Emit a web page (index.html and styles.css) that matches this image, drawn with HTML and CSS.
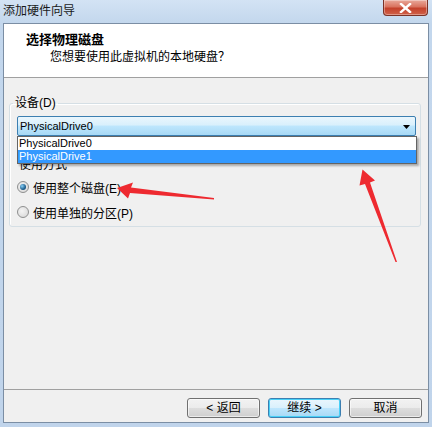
FILE: index.html
```html
<!DOCTYPE html>
<html lang="zh-CN">
<head>
<meta charset="utf-8">
<title>添加硬件向导</title>
<link rel="stylesheet" href="styles.css">
</head>
<body>
<div class="window">
  <div class="titlebar">
    <span class="title">添加硬件向导</span>
    <span class="close"><svg width="13" height="10" viewBox="0 0 13 10"><path d="M2 1 L11 9 M11 1 L2 9" stroke="#fff" stroke-width="2.4" stroke-linecap="square"/></svg></span>
  </div>
  <div class="client">
    <div class="header">
      <div class="h-title">选择物理磁盘</div>
      <div class="h-sub">您想要使用此虚拟机的本地硬盘？</div>
    </div>
    <div class="body">
      <fieldset class="group">
        <legend>设备(D)</legend>
        <div class="combo-wrap">
          <div class="combo">
            <span class="combo-text">PhysicalDrive0</span>
            <svg class="combo-arrow" width="7" height="4" viewBox="0 0 7 4"><path d="M0 0 H7 L3.5 4 Z" fill="#000"/></svg>
          </div>
          <ul class="dropdown">
            <li class="item">PhysicalDrive0</li>
            <li class="item selected">PhysicalDrive1</li>
          </ul>
        </div>
        <div class="mode-label">使用方式</div>
        <label class="radio-row"><span class="radio checked"></span><span>使用整个磁盘(E)</span></label>
        <label class="radio-row"><span class="radio"></span><span>使用单独的分区(P)</span></label>
      </fieldset>
    </div>
    <div class="footer">
      <button class="btn">&lt; 返回</button>
      <button class="btn default">继续 &gt;</button>
      <button class="btn">取消</button>
    </div>
  </div>
  <svg class="arrows" width="432" height="427" viewBox="0 0 432 427">
    <polygon fill="#ee2a30" points="117,188 133,182.5 131,187.5 214,198 214,199.5 130,193 128,198.5"/>
    <polygon fill="#ee2a30" points="362.5,169.5 375,180.5 370,182.5 397,262 395.5,262 365,184 359.5,185.5"/>
  </svg>
</div>
</body>
</html>
```

FILE: styles.css
```css
* { box-sizing: border-box; }
html, body { margin: 0; padding: 0; }
body {
  width: 432px;
  height: 427px;
  overflow: hidden;
  font-family: "Liberation Sans", "Noto Sans CJK SC", sans-serif;
  font-size: 12px;
  color: #000;
}
.window {
  position: relative;
  width: 432px;
  height: 427px;
  display: flex;
  flex-direction: column;
  background: linear-gradient(to bottom, #d3e3f4 0px, #c3d7ed 23px, #c0d4eb 100%);
  padding: 0 3px 4px 3px;
}
.titlebar {
  height: 23px;
  display: flex;
  justify-content: space-between;
  align-items: flex-start;
  margin: 0 -3px;
  padding: 0 4px 0 3px;
}
.title {
  font-family: "Noto Sans CJK SC", sans-serif;
  font-size: 12px;
  line-height: 14px;
  margin-top: 3px;
  color: #1a1a1a;
}
.close {
  width: 45px;
  height: 16px;
  display: flex;
  align-items: center;
  justify-content: center;
  border: 1px solid #7a3227;
  border-top: none;
  border-radius: 0 0 4px 4px;
  background: linear-gradient(to bottom, #e9a99b 0%, #d9735f 45%, #c4412b 55%, #d0624a 100%);
  box-shadow: inset 0 0 0 1px rgba(255,255,255,0.35);
}
.client {
  flex: 1;
  display: flex;
  flex-direction: column;
  border: 1px solid #7b8ea4;
  background: #f0f0f0;
}
.header {
  height: 54px;
  background: #fff;
  border-bottom: 1px solid #a0a0a0;
  padding: 7px 0 0 22px;
  font-family: "Noto Sans CJK SC", sans-serif;
}
.h-title {
  font-size: 13px;
  font-weight: bold;
  line-height: 16px;
}
.h-sub {
  font-size: 12px;
  line-height: 16px;
  margin-left: 24px;
  margin-top: 1px;
}
.body {
  flex: 1;
  padding: 18px 7px 0 5px;
}
.group {
  margin: 0;
  border: 1px solid #d5dfe5;
  border-radius: 3px;
  padding: 6px 4px 6px 7px;
  box-shadow: inset 1px 1px 0 #fff;
}
.group legend {
  padding: 0 2px;
  margin-left: -4px;
  line-height: 14px;
  font-size: 12px;
}
.combo-wrap {
  position: relative;
}
.combo {
  height: 20px;
  border: 1px solid #3c7fb1;
  border-radius: 2px;
  background: linear-gradient(to bottom, #eaf6fd 0%, #d9f0fc 45%, #bee6fd 50%, #a7d9f5 100%);
  display: flex;
  align-items: center;
  justify-content: space-between;
  padding: 0 5px 0 2px;
  font-size: 11px;
}
.combo-arrow { margin-top: 1px; }
.dropdown {
  position: absolute;
  top: 100%;
  left: 0;
  right: -1px;
  margin: 0;
  padding: 0;
  list-style: none;
  background: #fff;
  border: 1px solid #646464;
  box-shadow: 2px 2px 2px rgba(0,0,0,0.3);
  z-index: 2;
}
.item {
  height: 13px;
  line-height: 13px;
  font-size: 11px;
  padding-left: 1px;
}
.item.selected {
  background: #3399ff;
  color: #fff;
}
.mode-label {
  margin-top: 21px;
  line-height: 14px;
  padding-left: 2px;
  font-family: "Noto Sans CJK SC", sans-serif;
}
.radio-row {
  display: flex;
  align-items: center;
  gap: 4px;
  height: 16px;
  margin-top: 8px;
}
.radio-row + .radio-row { margin-top: 9px; }
.radio {
  width: 12px;
  height: 12px;
  border-radius: 50%;
  border: 1px solid #8e8f8f;
  background: radial-gradient(circle at 40% 40%, #f4f4f4, #d4d4d4);
  display: flex;
  align-items: center;
  justify-content: center;
}
.radio.checked::after {
  content: "";
  width: 6px;
  height: 6px;
  border-radius: 50%;
  background: radial-gradient(circle at 35% 35%, #8ad1f8, #1e5f8e 60%, #103e60);
}
.footer {
  height: 33px;
  border-top: 1px solid #a0a0a0;
  display: flex;
  justify-content: flex-end;
  align-items: flex-start;
  gap: 8px;
  padding: 8px 6px 0 0;
}
.btn {
  width: 73px;
  height: 20px;
  border: 1px solid #707070;
  border-radius: 3px;
  background: linear-gradient(to bottom, #f2f2f2 0%, #ebebeb 50%, #dddddd 51%, #cfcfcf 100%);
  font-family: "Liberation Sans", "Noto Sans CJK SC", sans-serif;
  font-size: 12px;
  line-height: 16px;
  padding: 0;
  color: #000;
  box-shadow: inset 0 0 0 1px rgba(255,255,255,0.6);
}
.btn.default {
  border-color: #3c7fb1;
  background: linear-gradient(to bottom, #eaf6fd 0%, #d9f0fc 50%, #bee6fd 51%, #a7d9f5 100%);
  box-shadow: inset 0 0 0 1px #48d0f7;
}
.arrows {
  position: absolute;
  left: 0;
  top: 0;
  pointer-events: none;
  z-index: 5;
}
```
